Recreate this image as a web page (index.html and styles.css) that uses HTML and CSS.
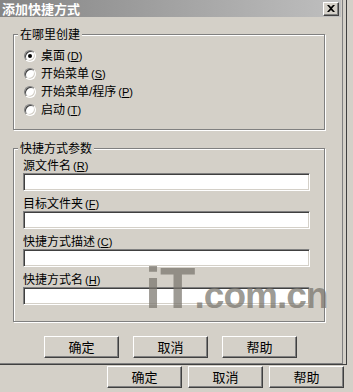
FILE: index.html
```html
<!DOCTYPE html>
<html lang="zh-CN">
<head>
<meta charset="utf-8">
<title>添加快捷方式</title>
<link rel="stylesheet" href="styles.css">
</head>
<body>
<div class="window">
  <div class="titlebar">
    <span class="title">添加快捷方式</span>
    <button class="close" aria-label="关闭"><svg width="8" height="7" viewBox="0 0 8 7"><path d="M0 0h2l2 2 2-2h2L5 3.5 8 7H6L4 5 2 7H0l3-3.5z" fill="#000"/></svg></button>
  </div>
  <fieldset class="group group-where">
    <legend>在哪里创建</legend>
    <div class="radio"><span class="circle checked"></span><span>桌面</span><span class="key">(<u>D</u>)</span></div>
    <div class="radio"><span class="circle"></span><span>开始菜单</span><span class="key">(<u>S</u>)</span></div>
    <div class="radio"><span class="circle"></span><span>开始菜单/程序</span><span class="key">(<u>P</u>)</span></div>
    <div class="radio"><span class="circle"></span><span>启动</span><span class="key">(<u>T</u>)</span></div>
  </fieldset>
  <fieldset class="group group-params">
    <legend>快捷方式参数</legend>
    <div class="field"><div class="label">源文件名<span class="key">(<u>R</u>)</span></div><div class="input"></div></div>
    <div class="field"><div class="label">目标文件夹<span class="key">(<u>F</u>)</span></div><div class="input"></div></div>
    <div class="field"><div class="label">快捷方式描述<span class="key">(<u>C</u>)</span></div><div class="input"></div></div>
    <div class="field"><div class="label">快捷方式名<span class="key">(<u>H</u>)</span></div><div class="input"></div></div>
  </fieldset>
  <div class="buttons inner">
    <button class="btn">确定</button>
    <button class="btn">取消</button>
    <button class="btn">帮助</button>
  </div>
  <div class="watermark"><span class="wm-big">iT</span><span class="wm-small">.com.cn</span></div>
</div>
<div class="buttons outer">
  <button class="btn">确定</button>
  <button class="btn">取消</button>
  <button class="btn">帮助</button>
</div>
</body>
</html>
```

FILE: styles.css
```css
html, body {
  margin: 0;
  padding: 0;
}
body {
  width: 353px;
  height: 392px;
  overflow: hidden;
  background: #d4d0c8;
  color: #000;
  font-family: "Liberation Sans", "Noto Sans CJK SC", sans-serif;
  font-size: 12px;
  line-height: 14px;
}
.window {
  position: relative;
  width: 347px;
  height: 365px;
  box-sizing: border-box;
  border-right: 1px solid #404040;
  border-bottom: 1px solid #404040;
  box-shadow: inset -3px 0 0 #d4d0c8, inset -4px 0 0 #808080, inset 0 -1px 0 #808080;
  overflow: hidden;
}
.titlebar {
  width: 341px;
  height: 17px;
  box-sizing: border-box;
  padding: 0 2px 0 2px;
  display: flex;
  align-items: center;
  justify-content: space-between;
  background: linear-gradient(to right, #858585, #bfbfbf);
}
.title {
  color: #fff;
  font-family: "Noto Sans CJK SC", sans-serif;
  font-weight: bold;
  font-size: 13px;
  line-height: 15px;
}
.close {
  width: 16px;
  height: 14px;
  padding: 0;
  margin: 0;
  display: flex;
  align-items: center;
  justify-content: center;
  background: #d4d0c8;
  border: 1px solid;
  border-color: #fff #404040 #404040 #fff;
  box-shadow: inset -1px -1px 0 #808080;
  box-sizing: border-box;
}
.group {
  margin: 0 0 0 13px;
  width: 312px;
  box-sizing: border-box;
  border: 1px solid #808080;
  box-shadow: inset 1px 1px 0 #fff, 1px 1px 0 #fff;
  padding: 0 9px;
  min-width: 0;
}
.group legend {
  padding: 0 2px;
  margin-left: -5px;
  background: #d4d0c8;
  font-family: "Noto Sans CJK SC", sans-serif;
  line-height: 14px;
}
.group-where {
  margin-top: 10px;
  padding-top: 6px;
  padding-bottom: 10px;
}
.radio {
  height: 18px;
  display: flex;
  align-items: center;
}
.circle {
  width: 12px;
  height: 12px;
  box-sizing: border-box;
  margin-left: 1px;
  margin-right: 5px;
  border-radius: 50%;
  border: 1px solid;
  border-color: #808080 #fff #fff #808080;
  box-shadow: inset 1px 1px 0 #404040, inset -1px -1px 0 #d4d0c8;
  background: #fff;
  display: flex;
  align-items: center;
  justify-content: center;
}
.circle.checked::after {
  content: "";
  width: 4px;
  height: 4px;
  border-radius: 50%;
  background: #000;
}
.key {
  margin-left: 2px;
  font-family: "Liberation Sans", sans-serif;
  font-size: 11px;
}
.group-params {
  margin-top: 11px;
  padding-top: 3px;
  padding-bottom: 16px;
}
.field + .field {
  margin-top: 5px;
}
.label {
  height: 14px;
  font-family: "Noto Sans CJK SC", sans-serif;
}
.label .key {
  font-family: "Liberation Sans", sans-serif;
}
.input {
  margin-top: 1px;
  width: 287px;
  height: 18px;
  box-sizing: border-box;
  background: #fff;
  border: 1px solid;
  border-color: #808080 #fff #fff #808080;
  box-shadow: inset 1px 1px 0 #404040, inset -1px -1px 0 #d4d0c8;
}
.buttons {
  display: flex;
}
.buttons.inner {
  margin-top: 14px;
  padding-left: 44px;
  gap: 14px;
}
.buttons.outer {
  margin-top: 1px;
  justify-content: flex-end;
  padding-right: 9px;
  gap: 6px;
}
.btn {
  width: 75px;
  height: 22px;
  padding: 0;
  margin: 0;
  box-sizing: border-box;
  background: #d4d0c8;
  border: 1px solid;
  border-color: #fff #404040 #404040 #fff;
  box-shadow: inset -1px -1px 0 #808080;
  font-family: "Noto Sans CJK SC", sans-serif;
  font-size: 13px;
  line-height: 14px;
  color: #000;
}
.watermark {
  position: absolute;
  left: 145px;
  top: 258px;
  color: rgba(120, 116, 108, 0.72);
  font-family: "Liberation Sans", sans-serif;
  font-weight: bold;
  white-space: nowrap;
  pointer-events: none;
  letter-spacing: -1px;
}
.wm-big {
  font-size: 58px;
  line-height: 60px;
}
.wm-small {
  font-size: 37px;
  line-height: 60px;
}
```
